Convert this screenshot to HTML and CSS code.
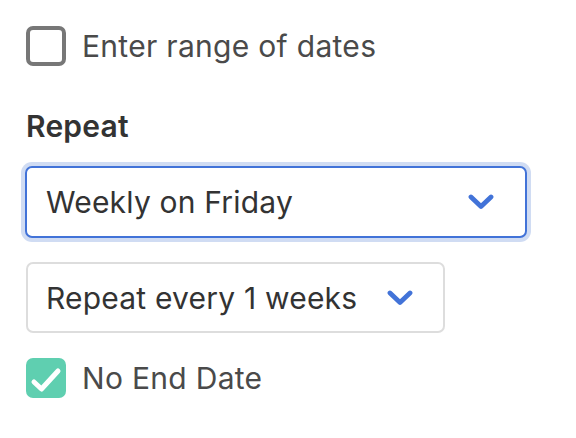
FILE: index.html
```html
<!DOCTYPE html>
<html>
<head>
<meta charset="utf-8">
<link rel="stylesheet" href="styles.css">
</head>
<body>
<div class="form">
  <label class="check-row">
    <span class="box box-empty"></span>
    <span class="check-label">Enter range of dates</span>
  </label>
  <h2 class="heading">Repeat</h2>
  <div class="select select-focus">
    <span class="select-text">Weekly on Friday</span>
    <svg class="chev" width="26" height="16" viewBox="0 0 26 16"><polyline points="3,3 13,12.5 23,3" fill="none" stroke="#4273d8" stroke-width="4.8" stroke-linecap="round" stroke-linejoin="round"/></svg>
  </div>
  <div class="select select-small">
    <span class="select-text">Repeat every 1 weeks</span>
    <svg class="chev" width="26" height="16" viewBox="0 0 26 16"><polyline points="3,3 13,12.5 23,3" fill="none" stroke="#4273d8" stroke-width="4.8" stroke-linecap="round" stroke-linejoin="round"/></svg>
  </div>
  <label class="check-row">
    <span class="box box-checked">
      <svg width="40" height="40" viewBox="0 0 40 40"><polyline points="8,24 15.5,31 32,13" fill="none" stroke="#ffffff" stroke-width="5" stroke-linecap="round" stroke-linejoin="round"/></svg>
    </span>
    <span class="check-label">No End Date</span>
  </label>
</div>
</body>
</html>
```
FILE: styles.css
```css
html, body {
  margin: 0;
  padding: 0;
  background: #ffffff;
}
body {
  font-family: Inter, "Noto Sans", sans-serif;
  color: #333333;
}
.form {
  display: flex;
  flex-direction: column;
  align-items: flex-start;
  padding: 26px 0 0 26px;
}
.check-row {
  display: flex;
  align-items: center;
  gap: 16px;
  height: 40px;
}
.box {
  box-sizing: border-box;
  width: 40px;
  height: 40px;
  border-radius: 7px;
  display: block;
  flex: none;
}
.box-empty {
  border: 4px solid #777777;
}
.box-checked {
  background: #5fcfb0;
}
.box-checked svg {
  display: block;
}
.check-label {
  font-size: 30px;
  color: #4a4a4a;
  line-height: 36px;
  letter-spacing: 0.3px;
}
.heading {
  margin: 42px 0 0 0;
  font-size: 30px;
  line-height: 36px;
  font-weight: 600;
  color: #333333;
  letter-spacing: 0.2px;
}
.select {
  box-sizing: border-box;
  display: flex;
  align-items: center;
  justify-content: space-between;
  border-radius: 7px;
  background: #ffffff;
}
.select-focus {
  margin-top: 22px;
  margin-left: -1px;
  width: 502px;
  height: 72px;
  border: 2px solid #4273d8;
  box-shadow: 0 0 0 4px #d0dcf3;
  padding: 0 31px 0 19px;
}
.select-small {
  margin-top: 24px;
  width: 419px;
  height: 71px;
  border: 2px solid #dddddd;
  padding: 0 30px 0 18px;
}
.select-text {
  font-size: 30px;
  line-height: 36px;
  color: #333333;
  letter-spacing: 0.2px;
}
.chev {
  display: block;
  flex: none;
}
.select-small + .check-row {
  margin-top: 25px;
}
```
